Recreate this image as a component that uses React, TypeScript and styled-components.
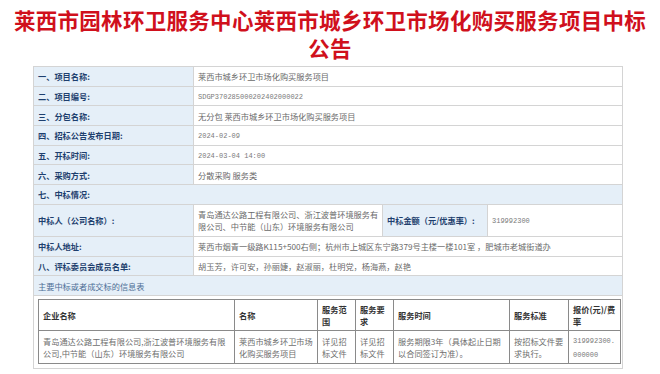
import React from 'react';
import styled, { createGlobalStyle } from 'styled-components';

const GlobalStyle = createGlobalStyle`
  html, body {
    margin: 0;
    padding: 0;
    background: #ffffff;
  }
  body {
    font-family: "Noto Sans CJK SC", "Noto Sans", sans-serif;
  }
`;

const Page = styled.div`
  width: 660px;
  height: 374px;
  overflow: hidden;
  background: #fff;
`;

const Title = styled.h1`
  margin: 0 -10px;
  padding: 6px 0 0;
  height: 66px;
  box-sizing: border-box;
  color: #d0101c;
  font-size: 21.5px;
  font-weight: 700;
  line-height: 28px;
  text-align: center;
  letter-spacing: 0.3px;
`;

const Outer = styled.table`
  margin-left: 33px;
  width: 590px;
  border-collapse: collapse;
  table-layout: fixed;
  border: 1px solid #b4b4b4;
  font-size: 8.2px;
`;

const Row = styled.tr<{ $h?: number }>`
  height: ${(p) => p.$h ?? 19.7}px;
`;

const Label = styled.td`
  background: #e5eff8;
  color: #1e3f6e;
  font-weight: 700;
  border: 1px solid #d4d4d4;
  padding: 0 4px;
  white-space: nowrap;
  line-height: 12px;
`;

const Value = styled.td`
  background: #fff;
  color: #6a6a6a;
  border: 1px solid #d4d4d4;
  padding: 0 0 0 4px;
  line-height: 12px;
`;

const Mono = styled.span`
  font-family: "Liberation Mono", monospace;
  font-size: 7px;
  color: #7a7a7a;
  word-break: break-all;
`;

const Caption = styled.td`
  background: #e5eff8;
  color: #4d6e96;
  border: 1px solid #d4d4d4;
  padding: 0 4px;
  line-height: 12px;
`;

const Holder = styled.td`
  background: #fff;
  border: 1px solid #d4d4d4;
  padding: 3px 3px 4px 4px;
  vertical-align: top;
`;

const Inner = styled.table`
  width: 582px;
  border-collapse: collapse;
  table-layout: fixed;
  border: 1px solid #8a8a8a;
  font-size: 8.2px;
`;

const Head = styled.th`
  border: 1px solid #8a8a8a;
  color: #333;
  font-weight: 700;
  text-align: left;
  padding: 0 3px 0 4px;
  line-height: 12px;
  height: 30px;
`;

const Cell = styled.td`
  border: 1px solid #8a8a8a;
  color: #6e6e6e;
  padding: 0 3px 0 4px;
  line-height: 12px;
  height: 32px;
`;

const summary: [string, React.ReactNode][] = [
  ['一、项目名称:', '莱西市城乡环卫市场化购买服务项目'],
  ['二、项目编号:', <Mono key="c">SDGP370285000202402000022</Mono>],
  ['三、分包名称:', '无分包 莱西市城乡环卫市场化购买服务项目'],
  ['四、招标公告发布日期:', <Mono key="d">2024-02-09</Mono>],
  ['五、开标时间:', <Mono key="t">2024-03-04 14:00</Mono>],
  ['六、采购方式:', '分散采购 服务类'],
];

const cols = [196, 83, 38, 38, 116, 59, 52];

export default function App() {
  return (
    <Page>
      <GlobalStyle />
      <Title>
        莱西市园林环卫服务中心莱西市城乡环卫市场化购买服务项目中标
        <br />
        公告
      </Title>
      <Outer>
        <colgroup>
          <col style={{ width: 160 }} />
          <col style={{ width: 189 }} />
          <col style={{ width: 105 }} />
          <col />
        </colgroup>
        <tbody>
          {summary.map(([k, v]) => (
            <Row key={k}>
              <Label>{k}</Label>
              <Value colSpan={3}>{v}</Value>
            </Row>
          ))}
          <Row>
            <Label colSpan={4}>七、中标情况:</Label>
          </Row>
          <Row $h={32.3}>
            <Label>中标人（公司名称）:</Label>
            <Value>
              青岛通达公路工程有限公司、浙江波普环境服务有限公司、中节能（山东）环境服务有限公司
            </Value>
            <Label>中标金额（元/优惠率）:</Label>
            <Value>
              <Mono>319992300</Mono>
            </Value>
          </Row>
          <Row>
            <Label>中标人地址:</Label>
            <Value colSpan={3}>
              莱西市烟青一级路K115+500右侧；杭州市上城区东宁路379号主楼一楼101室 ，肥城市老城街道办
            </Value>
          </Row>
          <Row>
            <Label>八、评标委员会成员名单:</Label>
            <Value colSpan={3}>胡玉芳，许可安，孙丽婕，赵淑丽，杜明党，杨海燕，赵艳</Value>
          </Row>
          <Row>
            <Caption colSpan={4}>主要中标或者成交标的信息表</Caption>
          </Row>
          <tr>
            <Holder colSpan={4}>
              <Inner>
                <colgroup>
                  {cols.map((w, i) => (
                    <col key={i} style={{ width: w }} />
                  ))}
                </colgroup>
                <thead>
                  <tr>
                    <Head>企业名称</Head>
                    <Head>名称</Head>
                    <Head>服务范围</Head>
                    <Head>服务要求</Head>
                    <Head>服务时间</Head>
                    <Head>服务标准</Head>
                    <Head>报价(元)/费率</Head>
                  </tr>
                </thead>
                <tbody>
                  <tr>
                    <Cell>青岛通达公路工程有限公司,浙江波普环境服务有限公司,中节能（山东）环境服务有限公司</Cell>
                    <Cell>莱西市城乡环卫市场化购买服务项目</Cell>
                    <Cell>详见招标文件</Cell>
                    <Cell>详见招标文件</Cell>
                    <Cell>服务期限3年（具体起止日期以合同签订为准）。</Cell>
                    <Cell>按招标文件要求执行。</Cell>
                    <Cell>
                      <Mono>319992300.000000</Mono>
                    </Cell>
                  </tr>
                </tbody>
              </Inner>
            </Holder>
          </tr>
        </tbody>
      </Outer>
    </Page>
  );
}
